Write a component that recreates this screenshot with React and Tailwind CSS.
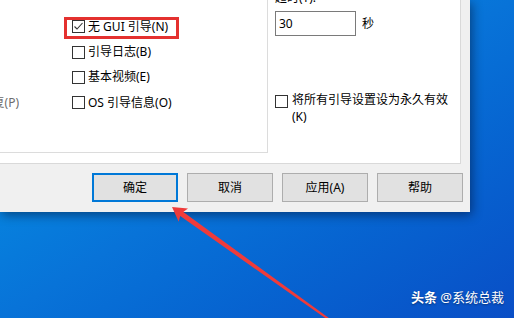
import React from 'react';

const FONT = { fontFamily: '"Noto Sans", "Noto Sans CJK SC", sans-serif' };

const BOOT_OPTS = [
  { label: '无 GUI 引导(N)', checked: true },
  { label: '引导日志(B)', checked: false },
  { label: '基本视频(E)', checked: false },
  { label: 'OS 引导信息(O)', checked: false },
];

const BUTTONS = ['确定', '取消', '应用(A)', '帮助'];

function Box({ checked }) {
  return (
    <span className="w-[13px] h-[13px] shrink-0 border border-[#333333] bg-white flex items-center justify-center">
      {checked && (
        <svg width="11" height="11" viewBox="0 0 11 11">
          <path d="M1.5 5.5 L4 8 L9.5 2" fill="none" stroke="#333333" strokeWidth="1.1" />
        </svg>
      )}
    </span>
  );
}

// arrow geometry: tip at (172,207), pointing back along u
const u = [0.813, 0.582];
const p = [-0.582, 0.813];
const T = [172, 207];
const pt = (a, b) => `${(T[0] + a * u[0] + b * p[0]).toFixed(1)},${(T[1] + a * u[1] + b * p[1]).toFixed(1)}`;
const ARROW = [pt(0, 0), pt(14, 8), pt(12, 2.6), pt(200, 1), pt(200, -1), pt(12, -2.6), pt(14, -8)].join(' ');

export default function App() {
  return (
    <div
      className="relative w-[514px] h-[318px] overflow-hidden bg-linear-to-br from-[#0b9be9] via-[#0873d8] to-[#0a4ec6] text-[12px] text-black"
      style={FONT}
    >
      <div className="w-[470px] h-[212px] bg-[#f0f0f0] flex flex-col shadow-[2px_3px_10px_rgba(0,0,20,0.45)]">
        {/* tab page */}
        <div className="w-[461px] h-[164px] bg-white border-r border-b border-[#d9d9d9] flex overflow-hidden">
          {/* boot options group */}
          <div className="relative w-[268px] h-[153px] shrink-0 border-r border-b border-[#dcdcdc] flex pt-[14px]">
            <div className="w-[19px] shrink-0 overflow-hidden flex flex-col items-end">
              <div className="h-[25.4px]" />
              <div className="h-[25.4px]" />
              <div className="h-[25.4px]" />
              <div className="h-[25.4px] flex items-center whitespace-nowrap text-[#6d6d6d] leading-none">修复(P)</div>
            </div>
            <div className="ml-[53px] flex flex-col">
              {BOOT_OPTS.map((o) => (
                <div key={o.label} className="h-[25.4px] flex items-center gap-[3px] leading-none whitespace-nowrap">
                  <Box checked={o.checked} />
                  <span>{o.label}</span>
                </div>
              ))}
            </div>
            <div className="absolute left-[64px] top-[17px] w-[115px] h-[22px] border-[3px] border-[#e4312f]" />
          </div>

          {/* timeout column */}
          <div className="flex flex-col pl-[7px]">
            <div className="h-[14px] -mt-[10px] leading-none whitespace-nowrap flex items-end">超时(T):</div>
            <div className="flex items-center mt-[7px]">
              <div className="w-[81px] h-[25px] border border-[#7a7a7a] bg-white flex items-center pl-[3px] leading-none">30</div>
              <span className="ml-[6px] leading-none">秒</span>
            </div>
            <div className="mt-[58px] flex items-start gap-[4px]">
              <span className="mt-[1px]"><Box checked={false} /></span>
              <span className="w-[160px] leading-[17px] -mt-[3px]">将所有引导设置设为永久有效(K)</span>
            </div>
          </div>
        </div>

        {/* button row */}
        <div className="flex justify-end gap-[9px] pr-[7px] mt-[9px]">
          {BUTTONS.map((b, i) => (
            <div
              key={b}
              className={
                i === 0
                  ? 'w-[86px] h-[29px] bg-[#e1e1e1] border-2 border-[#0078d7] flex items-center justify-center leading-none'
                  : 'w-[86px] h-[29px] bg-[#e1e1e1] border border-[#adadad] flex items-center justify-center leading-none'
              }
            >
              {b}
            </div>
          ))}
        </div>
      </div>

      {/* red annotation arrow */}
      <svg className="absolute left-0 top-0" width="514" height="318" viewBox="0 0 514 318">
        <polygon points={ARROW} fill="#ef3b3a" />
      </svg>

      {/* watermark */}
      <div className="absolute right-[10px] top-[291px] text-white text-[13px] leading-none whitespace-nowrap [text-shadow:0_1px_2px_rgba(0,0,0,0.4)]">
        <span className="font-bold">头条</span> @系统总裁
      </div>
    </div>
  );
}
